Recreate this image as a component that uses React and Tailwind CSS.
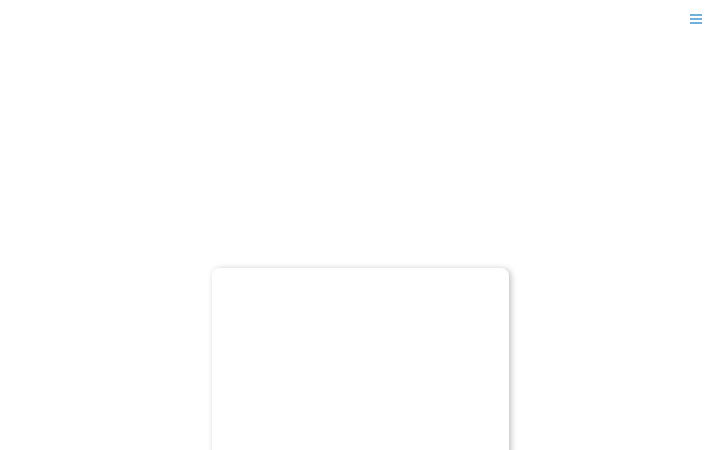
export default function App() {
  return (
    <div className="w-[720px] h-[450px] overflow-hidden bg-white flex flex-col" style={{ fontFamily: '"Liberation Sans", sans-serif' }}>
      <div className="flex justify-end pt-[13px] pr-[18px]">
        <svg width="12" height="12" viewBox="0 0 12 12">
          <rect x="0" y="1" width="12" height="2" fill="#6fb1da" />
          <rect x="0" y="5" width="12" height="2" fill="#6fb1da" />
          <rect x="0" y="9" width="12" height="2" fill="#6fb1da" />
        </svg>
      </div>
      <div className="flex justify-center mt-[243px]">
        <div className="w-[297px] h-[220px] bg-white rounded-[8px] shadow-[2px_1px_6px_rgba(0,0,0,0.25)]"></div>
      </div>
    </div>
  );
}
